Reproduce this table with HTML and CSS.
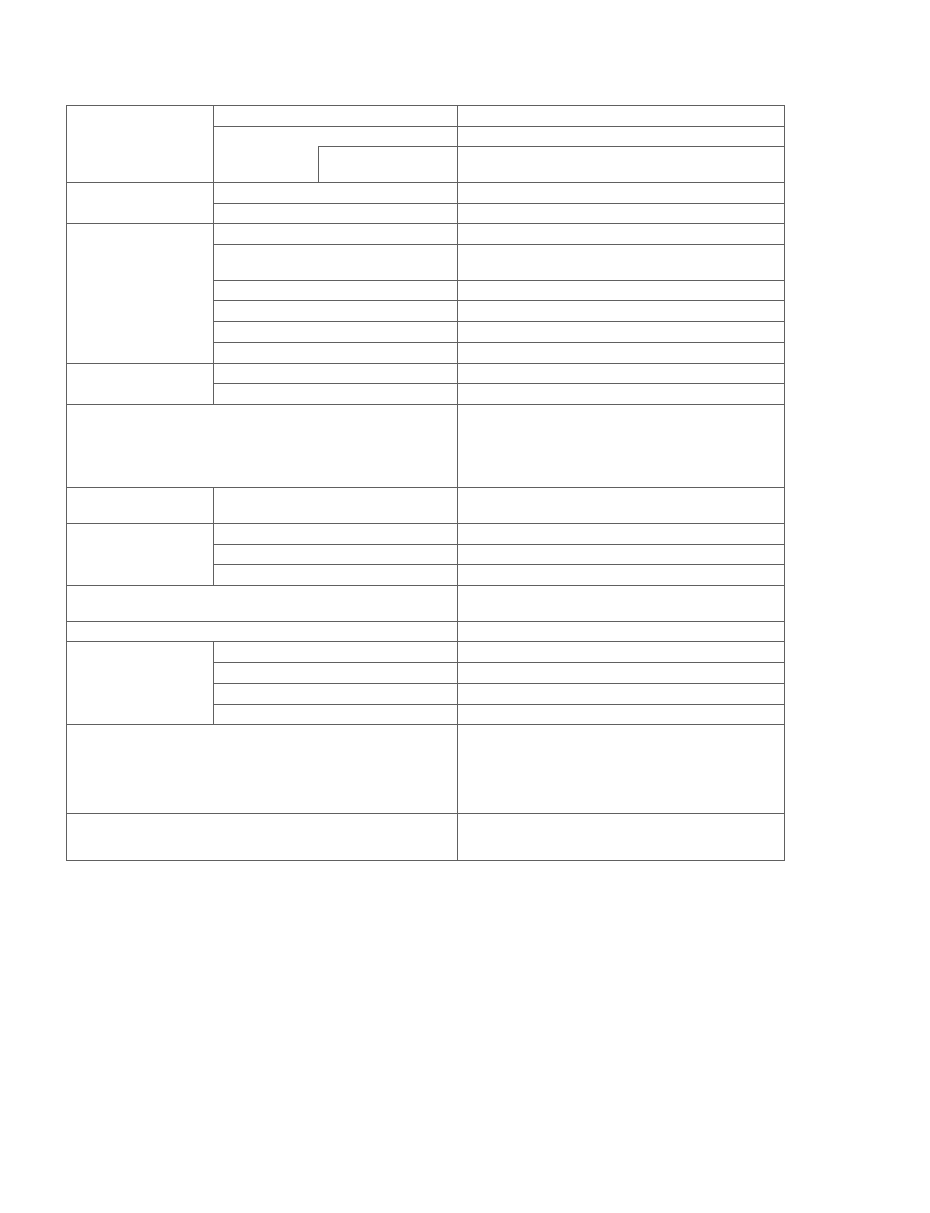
FILE: index.html
```html
<!DOCTYPE html>
<html lang="en">
<head>
<meta charset="utf-8">
<title>Table</title>
<link rel="stylesheet" href="styles.css">
</head>
<body>
<table class="grid">
  <colgroup>
    <col class="c1"><col class="c2"><col class="c3"><col class="c4">
  </colgroup>
  <tbody>
    <tr class="h21"><td rowspan="3"></td><td colspan="2"></td><td></td></tr>
    <tr class="h20"><td rowspan="2" class="no-right"></td><td class="no-left"></td><td></td></tr>
    <tr class="h36"><td class="with-left"></td><td></td></tr>

    <tr class="h21"><td rowspan="2"></td><td colspan="2"></td><td></td></tr>
    <tr class="h20"><td colspan="2"></td><td></td></tr>

    <tr class="h21"><td rowspan="6"></td><td colspan="2"></td><td></td></tr>
    <tr class="h36"><td colspan="2"></td><td></td></tr>
    <tr class="h20"><td colspan="2"></td><td></td></tr>
    <tr class="h21"><td colspan="2"></td><td></td></tr>
    <tr class="h21"><td colspan="2"></td><td></td></tr>
    <tr class="h21"><td colspan="2"></td><td></td></tr>

    <tr class="h20"><td rowspan="2"></td><td colspan="2"></td><td></td></tr>
    <tr class="h21"><td colspan="2"></td><td></td></tr>

    <tr class="h83"><td colspan="3"></td><td></td></tr>

    <tr class="h36"><td></td><td colspan="2"></td><td></td></tr>

    <tr class="h21"><td rowspan="3"></td><td colspan="2"></td><td></td></tr>
    <tr class="h20"><td colspan="2"></td><td></td></tr>
    <tr class="h21"><td colspan="2"></td><td></td></tr>

    <tr class="h36"><td colspan="3"></td><td></td></tr>
    <tr class="h20"><td colspan="3"></td><td></td></tr>

    <tr class="h21"><td rowspan="4"></td><td colspan="2"></td><td></td></tr>
    <tr class="h21"><td colspan="2"></td><td></td></tr>
    <tr class="h21"><td colspan="2"></td><td></td></tr>
    <tr class="h20"><td colspan="2"></td><td></td></tr>

    <tr class="h89"><td colspan="3"></td><td></td></tr>
    <tr class="h47"><td colspan="3"></td><td></td></tr>
  </tbody>
</table>
</body>
</html>
```

FILE: styles.css
```css
html, body {
  margin: 0;
  padding: 0;
  background: #ffffff;
  font-family: "Liberation Serif", "Times New Roman", serif;
}

.grid {
  margin: 105px 0 0 66px;
  table-layout: fixed;
  border-collapse: separate;
  border-spacing: 0;
  border-top: 1px solid #606060;
  border-left: 1px solid #606060;
  width: 719px;
}

.c1 { width: 147px; }
.c2 { width: 104px; }
.c3 { width: 140px; }
.c4 { width: 327px; }

.grid td {
  padding: 0;
  border-right: 1px solid #606060;
  border-bottom: 1px solid #606060;
  font-size: 0;
  line-height: 0;
  box-sizing: border-box;
}

.grid td.no-right { border-right: none; }
.grid td.no-left { border-left: none; }
.grid td.with-left { border-left: 1px solid #606060; }

.h20 { height: 20px; }
.h21 { height: 21px; }
.h36 { height: 36px; }
.h47 { height: 47px; }
.h83 { height: 83px; }
.h89 { height: 89px; }
```
